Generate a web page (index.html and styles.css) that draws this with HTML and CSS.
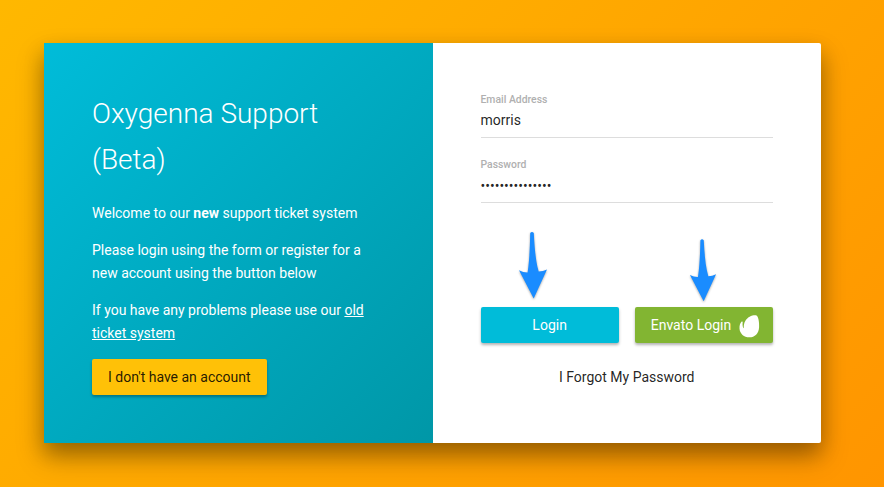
FILE: index.html
```html
<!DOCTYPE html>
<html lang="en">
<head>
<meta charset="utf-8">
<title>Oxygenna Support</title>
<link rel="stylesheet" href="styles.css">
</head>
<body>
<main class="card">
  <section class="intro">
    <h1>Oxygenna Support (Beta)</h1>
    <p>Welcome to our <strong>new</strong> support ticket system</p>
    <p>Please login using the form or register for a new account using the button below</p>
    <p>If you have any problems please use our <a href="#">old ticket system</a></p>
    <button class="btn amber" type="button">I don't have an account</button>
  </section>
  <form class="form">
    <div class="field"><label>Email Address</label><div class="value">morris</div></div>
    <div class="field"><label>Password</label><div class="value dots">•••••••••••••••</div></div>
    <div class="actions">
      <button class="btn cyan" type="button">Login</button>
      <button class="btn green" type="button"><span>Envato Login</span>
        <svg class="leaf" viewBox="0 0 21 24" width="21" height="24"><path d="M17.5 1.6C19.3 2.6 20.4 8.2 20.1 13.2C19.8 19.6 15.8 23.3 10.4 23.3C5 23.3.8 19.8.5 14.5C.3 11.5 1.3 8.9 2.7 7.6C3.3 7.1 3.8 7.5 3.7 8.2C3.4 10.2 3.6 12.2 4.2 13.7C4.5 14.4 4.8 14.2 4.8 13.6C4.6 8.8 6.8 4.9 10.6 2.8C13.2 1.4 16.2 1 17.5 1.6Z" fill="#fff"/></svg>
      </button>
    </div>
    <a class="forgot" href="#">I Forgot My Password</a>
  </form>
  <svg class="arrow first" viewBox="0 0 30 68" width="30" height="68"><path d="M12.2 1Q14 -1 15.8 1C16.5 14 17.5 29 20.7 39.5Q25 39.5 29 37.5L15.7 66.5L1 38.3Q5.3 40.6 9.6 40.5C11.3 30 12 14 12.2 1Z" fill="#1a8cff"/></svg>
  <svg class="arrow second" viewBox="0 0 30 68" width="28" height="64"><path d="M12.2 1Q14 -1 15.8 1C16.5 14 17.5 29 20.7 39.5Q25 39.5 29 37.5L15.7 66.5L1 38.3Q5.3 40.6 9.6 40.5C11.3 30 12 14 12.2 1Z" fill="#1a8cff"/></svg>
</main>
</body>
</html>
```
FILE: styles.css
```css
* { box-sizing: border-box; }
body { margin: 0; height: 487px; overflow: hidden; padding: 43px 63px 44px 44px; background: linear-gradient(135deg, #ffb800, #ff9500); font: 14px/23px Roboto, sans-serif; color: rgba(0,0,0,.87); }
.card { position: relative; display: grid; grid-template-columns: 1fr 1fr; height: 400px; border-radius: 0 2px 2px 0; background: #fff; box-shadow: 0 14px 28px rgba(0,0,0,.25), 0 10px 20px rgba(0,0,0,.22); }
.intro { padding: 48px; color: #fff; background: linear-gradient(135deg, #00bcd9, #0097a7); }
h1 { margin: 0 0 19px; font-size: 28px; line-height: 46px; font-weight: 300; }
p { margin: 0 0 14px; }
.intro a { color: inherit; }
.btn { display: flex; align-items: center; justify-content: center; height: 36px; padding: 0 16px; border: 0; border-radius: 2px; font: 14px Roboto, sans-serif; white-space: nowrap; color: #fff; box-shadow: 0 2px 3px rgba(0,0,0,.3); }
.amber { background: #ffc107; color: rgba(0,0,0,.87); }
.form { padding: 48px; }
.field { height: 65px; }
label { display: block; font-size: 10.4px; font-weight: 500; line-height: 17px; color: #b0b0b0; }
.value { height: 30px; line-height: 25px; border-bottom: 1px solid #ddd; }
.dots { padding-top: 1px; }
.actions { display: grid; grid-template-columns: 1fr 1fr; gap: 16px; margin-top: 86px; }
.cyan { background: #00bcd9; }
.green { background: #82b532; gap: 8px; justify-content: flex-start; padding-right: 0; }
.leaf { flex: none; margin-top: 1px; }
.forgot { display: block; margin-top: 23px; text-align: center; color: inherit; text-decoration: none; }
.arrow { position: absolute; overflow: visible; filter: drop-shadow(0 1px 1px rgba(0,0,0,.35)); }
.first { left: 474px; top: 189px; }
.second { left: 645px; top: 195.5px; }
```
